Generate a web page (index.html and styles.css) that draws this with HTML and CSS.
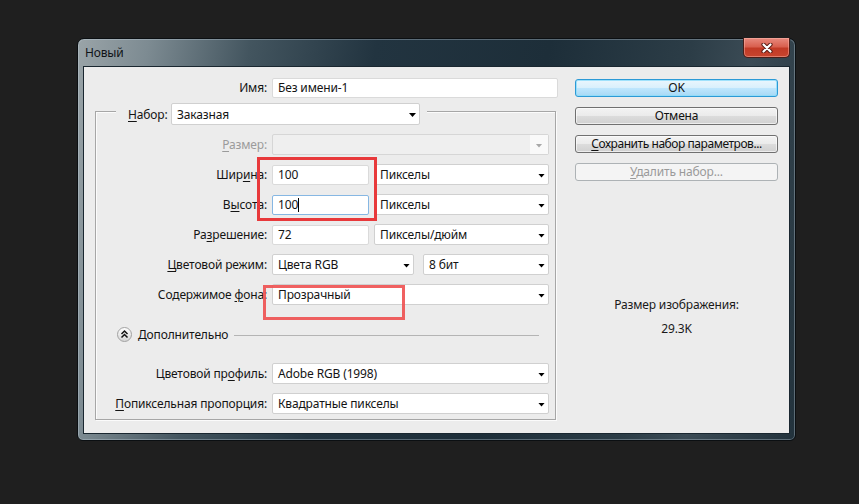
FILE: index.html
```html
<!DOCTYPE html>
<html lang="ru">
<head>
<meta charset="utf-8">
<title>Новый</title>
<link rel="stylesheet" href="styles.css">
</head>
<body>
<div class="window">
  <div class="titlebar">
    <span class="title">Новый</span>
    <div class="close">
      <svg width="14" height="10" viewBox="0 0 14 10">
        <path d="M3.5 1.5 L10.5 8.5 M10.5 1.5 L3.5 8.5" stroke="#5a1c14" stroke-width="4.2" stroke-linecap="round" fill="none"/>
        <path d="M3.5 1.5 L10.5 8.5 M10.5 1.5 L3.5 8.5" stroke="#ffffff" stroke-width="2.2" stroke-linecap="round" fill="none"/>
      </svg>
    </div>
  </div>
  <div class="client">
    <div class="left">
      <div class="row top-row">
        <span class="lbl lbl-outer">Имя:</span>
        <div class="field name">Без имени-1</div>
      </div>
      <div class="group">
        <div class="group-head">
          <span class="head-lbl"><u>Н</u>абор:</span>
          <div class="select preset"><span class="val">Заказная</span><i class="arrow"></i></div>
        </div>
        <div class="row first">
          <span class="lbl dim"><u>Р</u>азмер:</span>
          <div class="select full disabled"><span class="val"></span><span class="arrow-box"><i class="arrow"></i></span></div>
        </div>
        <div class="row">
          <span class="lbl">Шир<u>и</u>на:</span>
          <div class="field num">100</div>
          <div class="select unit"><span class="val">Пикселы</span><i class="arrow"></i></div>
        </div>
        <div class="row">
          <span class="lbl">В<u>ы</u>сота:</span>
          <div class="field num focus">100<span class="caret"></span></div>
          <div class="select unit"><span class="val">Пикселы</span><i class="arrow"></i></div>
        </div>
        <div class="row">
          <span class="lbl">Ра<u>з</u>решение:</span>
          <div class="field num">72</div>
          <div class="select unit"><span class="val">Пикселы/дюйм</span><i class="arrow"></i></div>
        </div>
        <div class="row">
          <span class="lbl"><u>Ц</u>ветовой режим:</span>
          <div class="select mode"><span class="val">Цвета RGB</span><i class="arrow"></i></div>
          <div class="select bits"><span class="val">8 бит</span><i class="arrow"></i></div>
        </div>
        <div class="row">
          <span class="lbl">Содержимое <u>ф</u>она:</span>
          <div class="select full"><span class="val">Прозрачный</span><i class="arrow"></i></div>
        </div>
        <div class="adv">
          <span class="adv-btn">
            <svg width="15" height="15" viewBox="0 0 15 15">
              <defs>
                <linearGradient id="cg" x1="0" y1="0" x2="0" y2="1">
                  <stop offset="0" stop-color="#ffffff"/>
                  <stop offset="1" stop-color="#d4d4d4"/>
                </linearGradient>
              </defs>
              <circle cx="7.5" cy="7.5" r="7" fill="url(#cg)" stroke="#a2a2a2"/>
              <path d="M4.5 7 L7.5 4 L10.5 7 M4.5 10.5 L7.5 7.5 L10.5 10.5" stroke="#111" stroke-width="1.5" fill="none"/>
            </svg>
          </span>
          <span class="adv-text">Дополнительно</span>
          <span class="adv-line"></span>
        </div>
        <div class="row profile">
          <span class="lbl">Цветовой пр<u>о</u>филь:</span>
          <div class="select full"><span class="val">Adobe RGB (1998)</span><i class="arrow"></i></div>
        </div>
        <div class="row">
          <span class="lbl"><u>П</u>опиксельная пропорция:</span>
          <div class="select full"><span class="val">Квадратные пикселы</span><i class="arrow"></i></div>
        </div>
      </div>
    </div>
    <div class="right">
      <div class="btn ok">OK</div>
      <div class="btn">Отмена</div>
      <div class="btn save"><u>С</u>охранить набор параметров...</div>
      <div class="btn off"><u>У</u>далить набор...</div>
      <div class="info">Размер изображения:</div>
      <div class="info size">29.3K</div>
    </div>
    <div class="mark mark-size"></div>
    <div class="mark mark-bg"></div>
  </div>
</div>
</body>
</html>
```

FILE: styles.css
```css
html, body {
  margin: 0;
  padding: 0;
}
body {
  background: #1f1f1f;
  font-family: "Noto Sans", "Open Sans", sans-serif;
  font-size: 12px;
  letter-spacing: -0.15px;
  color: #141414;
  width: 859px;
  height: 504px;
  overflow: hidden;
}
* { box-sizing: border-box; }
u {
  text-decoration: underline;
  text-decoration-thickness: 1px;
  text-underline-offset: 2px;
}

.window {
  margin: 38px 0 0 77px;
  width: 719px;
  height: 403px;
  border: 1px solid #0b0f12;
  border-radius: 7px 7px 6px 6px;
  padding: 0 5px 6px 5px;
  background: linear-gradient(100deg, #9aa4a8 0%, #7d8b92 9%, #43555f 22%, #223440 38%, #1d2e39 60%, #2c3d47 78%, #3b4b55 86%, #22323c 100%);
  box-shadow: inset 0 0 0 1px rgba(200, 215, 225, 0.35);
  display: flex;
  flex-direction: column;
}
.titlebar {
  height: 27px;
  display: flex;
  align-items: flex-start;
  justify-content: space-between;
}
.title {
  padding-left: 2px;
  line-height: 27px;
  color: #101418;
  font-size: 12px;
}
.close {
  width: 47px;
  height: 20px;
  margin-top: -1px;
  border: 1px solid #4a1d18;
  border-top: none;
  border-radius: 0 0 5px 5px;
  background: linear-gradient(#e88a7e 0%, #d9604f 45%, #c23a26 55%, #c8452e 100%);
  box-shadow: inset 0 0 0 1px rgba(255, 190, 180, 0.45);
  display: flex;
  align-items: center;
  justify-content: center;
}

.client {
  position: relative;
  flex: 1;
  border: 1px solid #1a2730;
  background: #ececec;
  display: flex;
  padding: 11px 0 0 11px;
}

.left {
  width: 462px;
}
.right {
  width: 203px;
  margin-left: 18px;
  padding-top: 1px;
  display: flex;
  flex-direction: column;
}

.row {
  display: flex;
  align-items: flex-end;
  height: 21px;
  margin-top: 9px;
}
.top-row {
  margin-top: 0;
  height: 20px;
}
.lbl {
  width: 176px;
  padding-right: 5px;
  text-align: right;
  line-height: 21px;
  white-space: nowrap;
  flex: none;
}
.lbl-outer {
  width: 177px;
  line-height: 20px;
}
.lbl.dim {
  color: #9b9b9b;
}

.field {
  height: 20px;
  background: #ffffff;
  border: 1px solid #dadada;
  border-radius: 2px;
  padding-left: 5px;
  line-height: 18px;
  white-space: nowrap;
  flex: none;
}
.field.name {
  width: 286px;
}
.field.num {
  width: 97px;
}
.field.focus {
  border-color: #86b7e3;
}
.caret {
  display: inline-block;
  width: 1px;
  height: 14px;
  background: #000;
  vertical-align: -3px;
}

.select {
  height: 21px;
  background: #ffffff;
  border: 1px solid #d0d0d0;
  border-radius: 2px;
  display: flex;
  align-items: center;
  padding: 0 3px 0 5px;
  flex: none;
}
.select .val {
  flex: 1;
  white-space: nowrap;
  line-height: 19px;
}
.arrow {
  display: block;
  width: 7px;
  height: 4px;
  background: #000;
  clip-path: polygon(0 0, 100% 0, 50% 100%);
  margin-top: 2px;
}
.select.full { width: 277px; }
.select.unit { width: 175px; margin-left: 5px; }
.select.mode { width: 142px; }
.select.bits { width: 126px; margin-left: 9px; }
.select.preset { width: 249px; height: 22px; }
.select.disabled {
  background: #efefef;
  border-color: #d6d6d6;
  padding: 0;
}
.arrow-box {
  width: 18px;
  height: 19px;
  background: #f9f9f9;
  display: flex;
  align-items: center;
  justify-content: center;
}
.select.disabled .arrow {
  background: #a8a8a8;
}

.group {
  margin-top: 13px;
  width: 461px;
  height: 309px;
  border: 1px solid #a6a6a6;
  box-shadow: inset 1px 1px 0 #fbfbfb, 1px 1px 0 #fbfbfb;
  padding-right: 7px;
}
.group-head {
  margin: -9px 0 0 20px;
  width: 311px;
  height: 22px;
  background: #ececec;
  display: flex;
  align-items: center;
  padding: 0 7px 0 12px;
}
.head-lbl {
  width: 44px;
  white-space: nowrap;
}
.row.first {
  margin-top: 9px;
}

.adv {
  display: flex;
  align-items: center;
  height: 15px;
  margin-top: 22px;
  padding-left: 21px;
}
.adv-btn {
  width: 15px;
  height: 15px;
  display: block;
}
.adv-btn svg { display: block; }
.adv-text {
  margin-left: 6px;
  white-space: nowrap;
}
.adv-line {
  flex: 1;
  height: 1px;
  background: #b4b4b4;
  margin: 1px 9px 0 6px;
}
.row.profile {
  margin-top: 21px;
}

.btn {
  height: 18px;
  margin-bottom: 10px;
  border: 1px solid #707070;
  border-radius: 3px;
  background: linear-gradient(#f3f3f3 0%, #ebebeb 48%, #dcdcdc 52%, #d0d0d0 100%);
  box-shadow: inset 0 0 0 1px rgba(255,255,255,0.6);
  text-align: center;
  line-height: 16px;
  white-space: nowrap;
  color: #111;
}
.btn.save {
  letter-spacing: -0.45px;
}
.btn.ok {
  border-color: #2c9ad6;
  background: linear-gradient(#eaf6fd 0%, #d9f0fc 48%, #bee6fd 52%, #a7d9f5 100%);
  box-shadow: inset 0 0 0 1px rgba(140, 220, 250, 0.8);
}
.btn.off {
  border-color: #adb2b5;
  background: #f4f4f4;
  color: #9a9a9a;
  box-shadow: none;
}
.info {
  text-align: center;
  line-height: 16px;
  margin-top: 106px;
  color: #1a1a1a;
}
.info.size {
  margin-top: 8px;
}

.mark {
  position: absolute;
  border: 3px solid #e8393b;
  pointer-events: none;
}
.mark-size {
  left: 173px;
  top: 90px;
  width: 120px;
  height: 64px;
}
.mark-bg {
  left: 179px;
  top: 218px;
  width: 142px;
  height: 35px;
  border-color: rgba(238, 80, 80, 0.9);
}
```
